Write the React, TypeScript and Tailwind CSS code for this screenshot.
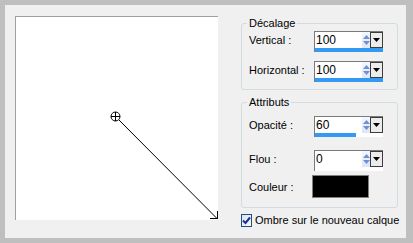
import React from 'react';

const font = { fontFamily: '"Liberation Sans", Arial, sans-serif' };

const SpinField: React.FC<{ value: string; fill: number }> = ({ value, fill }) => (
  <div className="w-[69px] h-[21px] flex flex-col border-t border-l border-[#7a7a7a] bg-white">
    <div className="flex h-[16px]">
      <div className="flex-1 pl-[1px] text-[12px] leading-[16px] text-black">{value}</div>
      <div className="w-[8px] flex flex-col items-center justify-center gap-[2px] bg-gradient-to-b from-[#f4f7fc] to-[#dfe6f3]">
        <svg width="7" height="4" viewBox="0 0 7 4">
          <path d="M0 4 L3.5 0 L7 4 Z" fill="#6f8fd6" />
        </svg>
        <svg width="7" height="4" viewBox="0 0 7 4">
          <path d="M0 0 L3.5 4 L7 0 Z" fill="#6f8fd6" />
        </svg>
      </div>
      <div className="w-[13px] border border-[#3c3c3c] bg-[#ececec] flex items-center justify-center">
        <svg width="7" height="4" viewBox="0 0 7 4">
          <path d="M0 0 L3.5 4 L7 0 Z" fill="#000" />
        </svg>
      </div>
    </div>
    <div className="h-[4px] bg-white">
      <div className="h-full bg-[#3399f3]" style={{ width: `${fill}%` }} />
    </div>
  </div>
);

const Row: React.FC<{ label: string; children: React.ReactNode; className?: string }> = ({ label, children, className }) => (
  <div className={`flex items-start ${className ?? ''}`}>
    <div className="w-[65px] pt-[1px] whitespace-nowrap text-[11px] leading-[16px] text-black">{label}</div>
    {children}
  </div>
);

export default function App() {
  return (
    <div className="w-[413px] h-[243px] bg-[#bfbfbf] pl-[5px] pt-[5px] pr-[7px] pb-[5px]" style={font}>
      <div className="w-full h-full bg-[#f0f0f0] flex">
        {/* preview canvas */}
        <div className="ml-[10px] mt-[11px] w-[203px] h-[204px] bg-white border-t border-l border-[#a0a0a0]">
          <svg width="202" height="203" viewBox="0 0 202 203">
            <circle cx="99.5" cy="99.5" r="4.5" fill="none" stroke="#000" strokeWidth="1" />
            <line x1="95" y1="99.5" x2="104" y2="99.5" stroke="#000" strokeWidth="1" />
            <line x1="99.5" y1="95" x2="99.5" y2="104" stroke="#000" strokeWidth="1" />
            <line x1="103" y1="103" x2="201" y2="201.5" stroke="#000" strokeWidth="1" />
            <line x1="194" y1="201.5" x2="201.5" y2="201.5" stroke="#000" strokeWidth="1" />
            <line x1="201.5" y1="194" x2="201.5" y2="202" stroke="#000" strokeWidth="1" />
          </svg>
        </div>

        {/* settings */}
        <div className="ml-[23px] w-[157px] pt-[11px] flex flex-col">
          <fieldset className="border border-[#d3dbe2] rounded-[3px] pl-[7px] pt-[1px] pb-[7px]">
            <legend className="-ml-[2px] px-[2px] text-[11px] leading-[14px] text-black">Décalage</legend>
            <Row label="Vertical :">
              <SpinField value="100" fill={100} />
            </Row>
            <Row label="Horizontal :" className="mt-[9px]">
              <SpinField value="100" fill={100} />
            </Row>
          </fieldset>

          <fieldset className="mt-[5px] border border-[#d3dbe2] rounded-[3px] pl-[7px] pt-[7px] pb-[9px]">
            <legend className="-ml-[2px] px-[2px] text-[11px] leading-[14px] text-black">Attributs</legend>
            <Row label="Opacité :">
              <SpinField value="60" fill={60} />
            </Row>
            <Row label="Flou :" className="mt-[13px]">
              <SpinField value="0" fill={0} />
            </Row>
            <div className="mt-[4px] flex items-center">
              <div className="w-[63px] text-[11px] leading-[16px] text-black">Couleur :</div>
              <div className="w-[57px] h-[23px] bg-black border border-[#808080]" />
            </div>
          </fieldset>

          <div className="mt-[4px] flex items-center">
            <div className="w-[13px] h-[13px] border border-[#1c5180] bg-gradient-to-br from-[#dce4f0] to-[#f7f9fc] flex items-center justify-center">
              <svg width="9" height="9" viewBox="0 0 9 9">
                <path d="M1 4.5 L3.5 7 L8 1.5" fill="none" stroke="#1a2f9c" strokeWidth="2" />
              </svg>
            </div>
            <span className="ml-[3px] whitespace-nowrap text-[11px] leading-[16px] text-black">Ombre sur le nouveau calque</span>
          </div>
        </div>
      </div>
    </div>
  );
}
